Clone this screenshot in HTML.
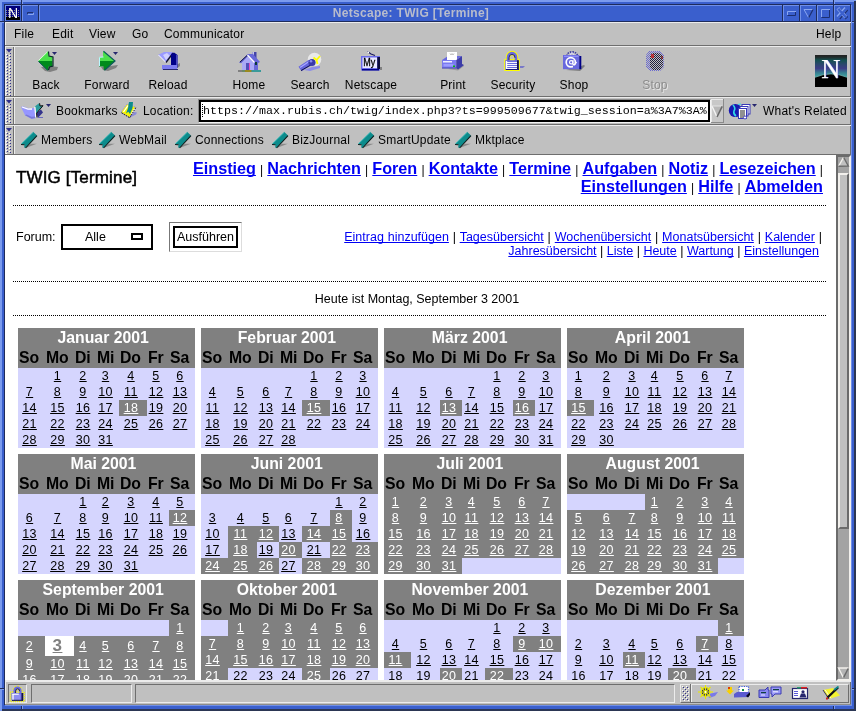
<!DOCTYPE html>
<html lang="de">
<head>
<meta charset="utf-8">
<title>Netscape: TWIG [Termine]</title>
<style>
*{box-sizing:border-box;margin:0;padding:0}
html,body{width:856px;height:711px;overflow:hidden}
body{position:relative;background:#3a5fcd;font-family:"Liberation Sans",sans-serif;font-size:12px;color:#000}
.abs,.abs>*{position:absolute}
#frame{position:absolute;left:0;top:0;width:856px;height:711px;will-change:transform}
#frame div{position:absolute}
/* window frame */
#fl1{left:0;top:0;width:2px;height:711px;background:#7b9bee}
#ft1{left:0;top:0;width:856px;height:2px;background:#7b9bee}
#fr1{left:854px;top:1px;width:2px;height:710px;background:#2b3654}
#fb1{left:2px;top:709px;width:854px;height:2px;background:#2b3654}
#fl2{left:4px;top:4px;width:1px;height:701px;background:#1f2c5c}
#ft2{left:4px;top:4px;width:847px;height:1px;background:#1f2c5c}
#fr2{left:851px;top:5px;width:1px;height:700px;background:#6f8fe8}
#fb2{left:5px;top:705px;width:847px;height:1px;background:#6f8fe8}
#tbline{left:5px;top:21px;width:846px;height:1px;background:#1f2c5c}
.nd{background:#1f2c5c}.nl{background:#7b9bee}
.vd{width:1px;height:16px;top:5px;background:#1f2c5c}
.vl{width:1px;height:16px;top:5px;background:#6f8fe8}
#title{left:40px;top:5px;width:742px;height:16px;line-height:16px;text-align:center;color:#b8bccc;font-weight:bold;font-size:12px;letter-spacing:.3px;white-space:nowrap}
/* chrome */
#chrome{position:absolute;left:5px;top:22px;width:846px;height:683px;background:#c0c0c0}
#cw{position:absolute;left:0;top:0;width:856px;height:711px;will-change:transform}
#cw>*{position:absolute}
#cw svg{position:absolute;overflow:visible}
.hl{background:#ececec;height:1px}
.vhl{background:#ececec;width:1px}
.sh{background:#6e6e6e;height:1px}
.t{font-size:12px;line-height:14px;white-space:nowrap;letter-spacing:.2px}
.tbtn{font-size:12px;line-height:14px;text-align:center;white-space:nowrap;width:70px;top:78px;letter-spacing:.2px}
.grip{display:none}
.inset{border:1px solid #ececec;border-top-color:#6e6e6e;border-left-color:#6e6e6e}
.outset{border:1px solid #6e6e6e;border-top-color:#ececec;border-left-color:#ececec}
#url{font-family:"Liberation Mono",monospace;font-size:11.67px;line-height:18px;padding-left:2px;white-space:nowrap;overflow:hidden}
/* content */
#view{position:absolute;left:5px;top:155px;width:831px;height:525px;background:#fff;overflow:hidden;font-size:12.5px}
#vi{position:absolute;left:0;top:0;width:831px;height:525px;will-change:transform}
#vi>div,#vi>a,#vi>span{position:absolute}
a{color:#0000f4;text-decoration:underline;text-decoration-skip-ink:none}
.dot{left:8px;width:814px;height:1px;background-image:linear-gradient(90deg,#000 1px,transparent 1px);background-size:2px 1px}
.nav{right:13px;white-space:nowrap;font-size:12px;line-height:20px;text-align:right;word-spacing:.8px}
.nav a{font-weight:bold;font-size:16.2px;text-decoration-thickness:1px;text-underline-offset:1px}
.sub{right:14px;white-space:nowrap;font-size:12.5px;line-height:14px;text-align:right;word-spacing:0}
.sub a{text-decoration-thickness:1px;text-underline-offset:1px}
.mon{position:absolute;width:177px;background:#d5d5fe}
.mon div{position:absolute}
.mt{left:0;top:0;width:177px;height:20px;background:#808080;color:#fff;font-weight:bold;font-size:17px;line-height:19px;text-align:center;white-space:nowrap}
.mt span{display:inline-block;transform:scaleX(.93);position:relative;left:-3px}
.wd{left:0;top:20px;width:177px;height:20px;background:#808080;font-weight:bold;font-size:17px;line-height:19px}
.wd span{position:absolute;top:0;text-align:left;padding-left:1px;transform-origin:0 0;transform:scaleX(.93);white-space:nowrap}
.wk{left:0;width:177px}
.d{position:absolute;top:0;text-align:center;text-decoration-skip-ink:none;font-size:12.5px;letter-spacing:.4px;text-decoration-thickness:1px;color:#000;text-decoration:underline;text-underline-offset:1px;padding-right:4px;padding-bottom:1px}
.d.b{background:#808080;color:#fff}
.d.today{background:#fff;color:#808080;font-weight:bold;font-size:17px}
</style>
</head>
<body>
<div id="frame">
<div id="fl1"></div><div id="ft1"></div><div id="fr1"></div><div id="fb1"></div>
<div id="fl2"></div><div id="ft2"></div><div id="fr2"></div><div id="fb2"></div>
<div style="left:0;top:709px;width:2px;height:2px;background:#7b9bee"></div>
<div style="left:5px;top:5px;width:846px;height:1px;background:#6f8fe8"></div>
<div id="tbline"></div>
<!-- resize notches -->
<div class="nd" style="left:21px;top:0;width:1px;height:4px"></div><div class="nl" style="left:22px;top:0;width:1px;height:4px"></div>
<div class="nd" style="left:833px;top:0;width:1px;height:4px"></div><div class="nl" style="left:834px;top:0;width:1px;height:4px"></div>
<div class="nd" style="left:21px;top:706px;width:1px;height:5px"></div><div class="nl" style="left:22px;top:706px;width:1px;height:3px"></div>
<div class="nd" style="left:833px;top:706px;width:1px;height:5px"></div><div class="nl" style="left:834px;top:706px;width:1px;height:3px"></div>
<div class="nd" style="left:0;top:21px;width:4px;height:1px"></div><div class="nl" style="left:0;top:22px;width:4px;height:1px"></div>
<div class="nd" style="left:852px;top:21px;width:2px;height:1px"></div><div class="nl" style="left:852px;top:22px;width:2px;height:1px"></div>
<div class="nd" style="left:0;top:688px;width:4px;height:1px"></div><div class="nl" style="left:0;top:689px;width:4px;height:1px"></div>
<div class="nd" style="left:852px;top:688px;width:4px;height:1px"></div><div class="nl" style="left:852px;top:689px;width:2px;height:1px"></div>
<div class="vl" style="left:5px"></div>
<div class="vd" style="left:21px"></div><div class="vl" style="left:22px"></div>
<div class="vd" style="left:38px"></div><div class="vl" style="left:39px"></div>
<div class="vd" style="left:782px"></div><div class="vl" style="left:783px"></div>
<div class="vd" style="left:799px"></div><div class="vl" style="left:800px"></div>
<div class="vd" style="left:816px"></div><div class="vl" style="left:817px"></div>
<div class="vd" style="left:833px"></div><div class="vl" style="left:834px"></div>
<div class="vd" style="left:850px"></div>
<div id="title">Netscape: TWIG [Termine]</div>
<svg width="856" height="22" viewBox="0 0 856 22" style="position:absolute;left:0;top:0">
<rect x="6" y="6" width="14" height="14" fill="#00007c"/>
<rect x="6" y="10" width="14" height="7" fill="url(#nd1)"/>
<rect x="6" y="17" width="14" height="3" fill="#000"/>
<text x="13" y="18" text-anchor="middle" font-family="Liberation Sans,sans-serif" font-size="14" fill="#fff">N</text>
<defs><pattern id="nd1" width="2" height="2" patternUnits="userSpaceOnUse"><rect width="1" height="1" fill="#8a8a8a"/></pattern></defs>
<!-- left menu button glyph (sunken) -->
<path d="M27.5,15 V12.5 H34" fill="none" stroke="#1c2f70" stroke-width="1"/><path d="M27.5,14.5 H33.5 V12.5" fill="none" stroke="#8aa6f0" stroke-width="1"/>
<!-- iconify -->
<path d="M787.5,15 V11.5 H796" fill="none" stroke="#8aa6f0" stroke-width="1"/><path d="M787.5,15.5 H795.5 V12" fill="none" stroke="#1c2f70" stroke-width="1"/>
<!-- shade -->
<path d="M813,9.5 H804 L808.5,17.5" fill="none" stroke="#8aa6f0" stroke-width="1"/><path d="M813,9.5 L808.8,17.5" fill="none" stroke="#1c2f70" stroke-width="1.2"/>
<!-- maximize -->
<path d="M821.5,17 V9.5 H830" fill="none" stroke="#8aa6f0" stroke-width="1"/><path d="M821.5,17.5 H829.5 V10" fill="none" stroke="#1c2f70" stroke-width="1"/>
<!-- close -->
<path d="M838.8,9.3 L846.8,18.3 M846.8,9.3 L838.8,18.3" fill="none" stroke="#1c2f70" stroke-width="3.6"/>
<path d="M837.8,8.3 L845.8,17.3 M845.8,8.3 L837.8,17.3" fill="none" stroke="#8aa6f0" stroke-width="3.6"/>
<path d="M838.3,8.8 L846.3,17.8 M846.3,8.8 L838.3,17.8" fill="none" stroke="#3a5fcd" stroke-width="2.4"/>
</svg>
</div>

<div id="chrome"></div>
<div id="cw">
<!-- menubar -->
<div class="hl" style="left:5px;top:22px;width:846px"></div>
<div class="vhl" style="left:5px;top:22px;height:683px"></div>
<div style="left:850px;top:23px;width:1px;height:132px;background:#6e6e6e"></div><div style="left:850px;top:682px;width:1px;height:23px;background:#6e6e6e"></div>
<span class="t" style="left:14px;top:27px">File</span><span class="t" style="left:52px;top:27px">Edit</span><span class="t" style="left:89px;top:27px">View</span><span class="t" style="left:132px;top:27px">Go</span><span class="t" style="left:164px;top:27px">Communicator</span><span class="t" style="left:816px;top:27px">Help</span>
<div class="sh" style="left:5px;top:45px;width:846px"></div>
<div class="hl" style="left:5px;top:46px;width:846px"></div>
<!-- toolbar 1 : y 46..96 -->
<div class="grip" style="left:6px;top:47px;height:49px"></div>
<div class="tbtn" style="left:11px">Back</div>
<div class="tbtn" style="left:72px">Forward</div>
<div class="tbtn" style="left:133px">Reload</div>
<div class="tbtn" style="left:214px">Home</div>
<div class="tbtn" style="left:275px">Search</div>
<div class="tbtn" style="left:336px">Netscape</div>
<div class="tbtn" style="left:418px">Print</div>
<div class="tbtn" style="left:478px">Security</div>
<div class="tbtn" style="left:539px">Shop</div>
<div class="tbtn" style="left:620px;color:#8c8c8c;text-shadow:1px 1px 0 #e6e6e6">Stop</div>
<!--ICONS1-->
<div class="sh" style="left:5px;top:96px;width:846px"></div>
<div class="hl" style="left:5px;top:97px;width:846px"></div>
<!-- location bar : y 97..125 -->
<div class="grip" style="left:6px;top:98px;height:26px"></div>
<span class="t" style="left:56px;top:104px">Bookmarks</span>
<span class="t" style="left:143px;top:104px">Location:</span>
<div style="left:198px;top:99px;width:513px;height:24px;border:1px solid #f4f4f4;border-top-color:#8a8a8a;border-left-color:#8a8a8a"></div>
<div id="url" style="left:199px;top:100px;width:511px;height:22px;border:2px solid #000;background:#fff">https://max.rubis.ch/twig/index.php3?ts=999509677&amp;twig_session=a%3A7%3A%</div>
<div id="cur" style="left:202px;top:104px;width:1px;height:14px;background-image:linear-gradient(#000 1px,transparent 1px);background-size:1px 2px"></div>
<span class="t" style="left:763px;top:104px">What's Related</span>
<!--ICONS2-->
<div class="sh" style="left:5px;top:124px;width:846px"></div>
<div class="hl" style="left:5px;top:125px;width:846px"></div>
<!-- personal bar : y 125..154 -->
<div class="grip" style="left:6px;top:126px;height:27px"></div>
<span class="t" style="left:41px;top:133px">Members</span>
<span class="t" style="left:119px;top:133px">WebMail</span>
<span class="t" style="left:195px;top:133px">Connections</span>
<span class="t" style="left:292px;top:133px">BizJournal</span>
<span class="t" style="left:378px;top:133px">SmartUpdate</span>
<span class="t" style="left:475px;top:133px">Mktplace</span>
<!--ICONS3-->
<div class="sh" style="left:5px;top:154px;width:846px"></div>
<!-- status bar : y 681..705 -->
<div class="hl" style="left:5px;top:680px;width:846px;height:2px"></div>
<div class="inset" style="left:8px;top:684px;width:19px;height:19px"></div>
<div class="inset" style="left:31px;top:684px;width:101px;height:19px"></div>
<div class="inset" style="left:135px;top:684px;width:540px;height:19px"></div>
<div class="outset" style="left:680px;top:684px;width:169px;height:19px"></div>
<div class="sh" style="left:5px;top:704px;width:846px;background:#8c8c8c"></div>
<svg id="ic" width="856" height="711" viewBox="0 0 856 711" style="left:0;top:0"><defs>
<pattern id="gp" x="6" y="53" width="7" height="3" patternUnits="userSpaceOnUse"><rect x="4" y="0" width="1" height="1" fill="#2e2e8a"/><rect x="3" y="2" width="1" height="1" fill="#fff"/><rect x="1" y="2" width="1" height="1" fill="#2e2e8a"/><rect x="0" y="1" width="1" height="1" fill="#fff"/></pattern>
<pattern id="gp2" x="682" y="686" width="4" height="4" patternUnits="userSpaceOnUse"><rect x="1" y="1" width="1" height="1" fill="#2e2e8a"/><rect x="0" y="0" width="1" height="1" fill="#fff"/><rect x="3" y="3" width="1" height="1" fill="#2e2e8a"/><rect x="2" y="2" width="1" height="1" fill="#fff"/></pattern>
<pattern id="ck" x="0" y="0" width="2" height="2" patternUnits="userSpaceOnUse"><rect x="0" y="0" width="1" height="1" fill="#202040"/><rect x="1" y="1" width="1" height="1" fill="#202040"/></pattern>
<pattern id="ck2" x="0" y="0" width="2" height="2" patternUnits="userSpaceOnUse"><rect x="0" y="0" width="1" height="1" fill="#6a6ad0"/><rect x="1" y="1" width="1" height="1" fill="#6a6ad0"/></pattern>
<linearGradient id="ng" x1="0" y1="0" x2="0" y2="1"><stop offset="0" stop-color="#222"/><stop offset=".06" stop-color="#202828"/><stop offset=".16" stop-color="#145050"/><stop offset=".3" stop-color="#2c4670"/><stop offset=".42" stop-color="#3c3c86"/><stop offset=".55" stop-color="#387c90"/><stop offset=".66" stop-color="#40a0a0"/><stop offset="1" stop-color="#40a0a0"/></linearGradient>
</defs>
<rect x="6" y="47" width="7" height="49" fill="url(#gp)"/>
<rect x="13" y="47" width="1" height="49" fill="#6e6e6e"/>
<rect x="14" y="47" width="1" height="49" fill="#ececec"/>
<rect x="6" y="47" width="7" height="6" fill="#c0c0c0"/>
<polygon points="6,49 12,49 9,52.5" fill="#2e2e8a"/>
<rect x="6" y="98" width="7" height="26" fill="url(#gp)"/>
<rect x="13" y="98" width="1" height="26" fill="#6e6e6e"/>
<rect x="14" y="98" width="1" height="26" fill="#ececec"/>
<rect x="6" y="98" width="7" height="6" fill="#c0c0c0"/>
<polygon points="6,100 12,100 9,103.5" fill="#2e2e8a"/>
<rect x="6" y="126" width="7" height="28" fill="url(#gp)"/>
<rect x="13" y="126" width="1" height="28" fill="#6e6e6e"/>
<rect x="14" y="126" width="1" height="28" fill="#ececec"/>
<rect x="6" y="126" width="7" height="6" fill="#c0c0c0"/>
<polygon points="6,128 12,128 9,131.5" fill="#2e2e8a"/>
<polygon points="41,67 50,66 58,67 57,70 50,72 45,71" fill="#808080"/>
<polygon points="38,61 48,51 48.6,56 52.5,56 52.5,61" fill="#4be04b"/>
<polygon points="38,61 52.5,61 52.5,66.5 48.6,66.5 48,70.5" fill="#008a1c"/>
<polyline points="48.5,51.5 49,56 53,57 53,66 49.5,67 48.5,70" fill="none" stroke="#0a2a2a" stroke-width="1.2"/>
<polyline points="38.5,60.5 47.5,51.8" fill="none" stroke="#d8ffd8" stroke-width="1"/>
<polyline points="38.5,61.5 47.5,70.2" fill="none" stroke="#0a5a5a" stroke-width="1"/>
<polygon points="52,52 57,52 54.5,55" fill="#26266e"/>
<polygon points="101,67 110,66 118,65 116,68 108,71 103,70" fill="#808080"/>
<polygon points="103,51 115,61 99,61 99,57 103,57" fill="#4be04b"/>
<polygon points="99,61 115,61 104,70.5 103.5,66.5 99,66.5" fill="#008a1c"/>
<polyline points="103.5,51.3 115,61 104.5,70.3" fill="none" stroke="#0a5a5a" stroke-width="1.2"/>
<polyline points="103.5,57 99.5,57.3 99.5,66" fill="none" stroke="#b8f8ff" stroke-width="1"/>
<polygon points="113,52 118,52 115.5,55" fill="#26266e"/>
<polygon points="166,70 176,69 180,66 180,63 178,64" fill="#808080"/>
<polygon points="158,55 164,52 173,52 166,62.5" fill="#9a9aff"/>
<polygon points="163,55 167,53 170,56 166,60" fill="#d0d0ff"/>
<polyline points="158.5,55 166,62.5" stroke="#fff" stroke-width="1" fill="none"/>
<polyline points="166,62.5 173,53" stroke="#101030" stroke-width="1.3" fill="none"/>
<polygon points="171,54 174,52.5 177.5,55 177.5,67.5 171,67.5" fill="#000088"/>
<rect x="176" y="55" width="1.5" height="13" fill="#4a4ac0"/>
<rect x="162" y="65" width="15" height="4.5" fill="#7c7cf0"/>
<rect x="163" y="69" width="15" height="1" fill="#26266e"/>
<rect x="238" y="70" width="23" height="2" fill="#6a8a6a"/>
<rect x="238" y="70" width="4" height="2" fill="#808080"/><rect x="252" y="70" width="9" height="2" fill="#3a9a9a"/><rect x="245" y="70" width="6" height="2" fill="#9a8a20"/>
<rect x="252" y="52" width="4.5" height="9" fill="#4444a8"/><rect x="252.5" y="52" width="1.2" height="4" fill="#fff"/>
<polygon points="247,54 253,54 260,62 258,63 258,70 254,70 254,62" fill="#6868d8"/>
<polygon points="242,62 247.5,56 254,62.5 254,70 242,70" fill="#aaaaf6"/>
<polygon points="239,62.5 247.5,54.5 248.5,55.5 241,63.3" fill="#5a5ad0"/>
<polyline points="247.5,55 254.5,62.5" stroke="#fff" stroke-width="1.2" fill="none"/>
<polyline points="240,62 247,55.5" stroke="#16163a" stroke-width="1" fill="none"/>
<rect x="246" y="63" width="3" height="7" fill="#5050b8"/><rect x="249" y="63" width="1" height="7" fill="#e050c0"/>
<rect x="255" y="62" width="2" height="3" fill="#0a3a3a"/>
<circle cx="314.5" cy="59.5" r="6.8" fill="#e9e9e9"/>
<polygon points="304,70 312,67 320,66 320,68 310,71" fill="#8c8ce8"/>
<polygon points="298.5,66.8 309,59.8 312.5,64.8 301.5,71.3" fill="#6464dc"/>
<polyline points="300,67.5 309.5,61.3" stroke="#a8a8ff" stroke-width="1.2" fill="none"/>
<polyline points="301,70.6 311.5,64.5" stroke="#101048" stroke-width="1" fill="none"/>
<circle cx="312" cy="62.5" r="3.6" fill="#3a3aa8"/>
<circle cx="311" cy="61.3" r="1.3" fill="#8a8af0"/>
<polyline points="313.5,57.5 316.5,60 320,56" stroke="#ffff00" stroke-width="1.8" fill="none"/>
<polyline points="316.5,60 317.5,64" stroke="#ffff00" stroke-width="1.8" fill="none"/>
<polyline points="367.5,51.5 371,54 375,55.5" stroke="#1a1a60" stroke-width="1.2" fill="none"/>
<rect x="367.5" y="51.5" width="1.5" height="1.5" fill="#fff"/>
<rect x="361" y="56" width="19" height="14.5" fill="#6c6cec"/>
<rect x="362.5" y="57.5" width="14.5" height="10.5" fill="#e9e9ff"/>
<rect x="377.3" y="57" width="2.7" height="12" fill="#0a0a3a"/>
<rect x="362" y="69" width="17" height="1.5" fill="#000088"/>
<text x="363.3" y="66.2" font-family="Liberation Sans,sans-serif" font-size="10" fill="#000" stroke="#000" stroke-width=".3" textLength="12" lengthAdjust="spacingAndGlyphs">My</text>
<rect x="380" y="67" width="2" height="3" fill="#808080"/>
<polygon points="448,69 458,70.5 464,66 462,64" fill="#808080" opacity=".6"/>
<polygon points="442,60 448,56 462,56 456,60" fill="#6a6ae0"/>
<rect x="447" y="52" width="10" height="8" fill="#fff"/>
<polyline points="450,53.5 451,55 452,53.5 453,55 454,53.5" stroke="#b0b0b0" stroke-width=".8" fill="none"/>
<rect x="442" y="60" width="14.3" height="8.3" fill="#7a7af0"/>
<rect x="443" y="61" width="9" height="1.5" fill="#f0f0ff"/>
<rect x="443.5" y="64" width="10" height="2.5" fill="#9c9cff"/>
<rect x="442" y="67.5" width="14.3" height="1" fill="#4a4ab0"/>
<polygon points="456.3,60 462,56 462,64 464,65 458,69.5 456.3,68.3" fill="#3c3ca8"/>
<rect x="453" y="65.5" width="2" height="1.5" fill="#00c000"/>
<path d="M508.0,61.0 V57.5 A4.0,4.5 0 0 1 516.0,57.5 V61.0" fill="none" stroke="#ffff00" stroke-width="4.4"/>
<rect x="504.2" y="59.2" width="15.6" height="11.8" fill="#ffff00"/>
<path d="M508.0,61.0 V57.5 A4.0,4.5 0 0 1 516.0,57.5 V61.0" fill="none" stroke="#6a6ae0" stroke-width="2.6"/>
<path d="M509.0,60.0 V57.8 A3.0,3.4 0 0 1 515.0,57.8" fill="none" stroke="#14147a" stroke-width="0.9"/>
<rect x="505.2" y="60.2" width="13.6" height="9.8" fill="#6a6ae0"/>
<rect x="507.0" y="62.0" width="10.0" height="1.0" fill="#f4f4ff" shape-rendering="crispEdges"/>
<rect x="507.0" y="64.0" width="10.0" height="1.0" fill="#f4f4ff" shape-rendering="crispEdges"/>
<rect x="507.0" y="66.0" width="10.0" height="1.0" fill="#f4f4ff" shape-rendering="crispEdges"/>
<rect x="507.0" y="68.0" width="10.0" height="1.0" fill="#f4f4ff" shape-rendering="crispEdges"/>
<rect x="505.8" y="61.0" width="1.4" height="8.0" fill="#fff"/>
<rect x="517.0" y="60.2" width="1.8" height="9.8" fill="#14144a"/>
<rect x="506.0" y="69.0" width="12.8" height="1.0" fill="#14147a"/>
<polygon points="520.0,66.0 525.0,66.0 523.0,68.0 520.0,68.0" fill="#7878c8"/>
<polygon points="566,70 580,71 585,66 584,65 581,66" fill="#808080"/>
<path d="M567,56 C567,50.5 577,50.5 577.5,56" fill="none" stroke="#3a3aa0" stroke-width="1.6" stroke-dasharray="1.5 1"/>
<path d="M569.5,56 L572,52.5 L575,56" fill="none" stroke="#d8d8ff" stroke-width="1"/>
<rect x="563" y="55" width="16.3" height="14.2" fill="#6868de"/>
<rect x="579.3" y="56" width="2" height="13.2" fill="#000088"/>
<rect x="564" y="55.8" width="14.5" height="1" fill="#9a9aff"/>
<circle cx="570.8" cy="62.3" r="4.6" fill="none" stroke="#fff" stroke-width="1.7"/>
<circle cx="571.2" cy="62.3" r="1.7" fill="none" stroke="#fff" stroke-width="1.1"/>
<path d="M573,60 V64.5 Q575.5,65 576.5,62" fill="none" stroke="#fff" stroke-width="1.1"/>
<rect x="573" y="65.5" width="4" height="3" fill="#6868de"/>
<path d="M649,51 H660 L664,55 V67 L660,71 H650 L646,67 V55 Z" fill="url(#ck2)"/>
<path d="M652,53 H659 L663,56 V66 L660,70 H653 L650,67 V56 Z" fill="url(#ck)"/>
<rect x="651" y="54" width="3" height="4" fill="#d02020" opacity=".75"/>
<rect x="661" y="56" width="2" height="3" fill="#901010" opacity=".6"/>
<rect x="815" y="55" width="32" height="32" fill="url(#ng)"/>
<path d="M815,77.3 Q831,70.5 847,77.3 V87 H815 Z" fill="#000"/>
<path d="M815,77.3 Q831,70.5 847,77.3" fill="none" stroke="#7ab8b8" stroke-width=".7"/>
<text x="831.6" y="78.3" text-anchor="middle" font-family="Liberation Serif,serif" font-size="26.5" fill="#4848c8" >N</text>
<text x="830.9" y="77.7" text-anchor="middle" font-family="Liberation Serif,serif" font-size="26.5" fill="#fff" stroke="#fff" stroke-width=".25">N</text>
<polygon points="21,107 23,106.3 29,108.5 31,108.5 34.5,107.7 35.8,118 31.5,118.7 25,115.3" fill="#9696ff"/>
<polyline points="22,107 28,109.2 32,109" stroke="#fff" stroke-width="1.3" fill="none"/>
<polygon points="25,115.3 31.5,118.7 35.8,118 35.5,116.5 31.5,116.8 26.5,114.5" fill="#7878d8"/>
<polygon points="36.3,113 41,109.5 43,112.5 38,117.8" fill="#34348c"/>
<polygon points="34.7,106.5 39.4,103 40,106 43,105.6 36.2,113.5" fill="#2a9c9c"/>
<polyline points="34.9,106.8 35.8,117.5" stroke="#fff" stroke-width="1.2" fill="none"/>
<polyline points="39.6,103.3 40,106 43,105.7 36.6,113.2 37,117.5" stroke="#0c0c0c" stroke-width="1" fill="none"/>
<rect x="38" y="117" width="5" height="1" fill="#6a6ac0"/>
<polygon points="46,104 51,104 48.5,107" fill="#26266e"/>
<polygon points="130,117.5 136,114.5 137,112.5 134,112" fill="#8a8ad8"/>
<polygon points="121,112.2 127,104 135.8,107.2 129.5,117.5" fill="#f4f400"/>
<polygon points="121,112.2 127,104 135.8,107.2 129.5,117.5" fill="none" stroke="#8c8cf0" stroke-width="1" stroke-dasharray="1.2 1"/>
<polyline points="123.5,112 128,105.5" stroke="#fff" stroke-width="1.3" fill="none"/>
<polyline points="131.5,114 134.8,108.5" stroke="#fff" stroke-width="1.3" fill="none"/>
<polyline points="129.8,117.6 135.9,107.4" stroke="#101020" stroke-width="1" fill="none" stroke-dasharray="1.5 1"/>
<polyline points="121.5,112.8 129.6,117.7" stroke="#101020" stroke-width="1" fill="none" stroke-dasharray="1.5 1"/>
<polygon points="129,102 133,102 132.5,108 130,114 128.3,111.8 126,113.5 128,108" fill="#0c8c8c"/>
<rect x="711" y="99" width="13" height="24" fill="#c8c8c8"/>
<rect x="711" y="99" width="13" height="1" fill="#e8e8e8"/><rect x="711" y="99" width="1" height="24" fill="#e8e8e8"/>
<rect x="723" y="99" width="1" height="24" fill="#8a8a8a"/><rect x="711" y="122" width="13" height="1" fill="#8a8a8a"/>
<polygon points="712,106 722.5,106 717,117" fill="#b8b8b8"/>
<polyline points="712,106 717,117" stroke="#f4f4f4" stroke-width="1.4" fill="none"/>
<polyline points="712,106 722,106" stroke="#e4e4e4" stroke-width="1" fill="none"/>
<polyline points="722.2,106.3 717,117" stroke="#6a6a6a" stroke-width="1.6" fill="none"/>
<circle cx="735.4" cy="110.5" r="6.6" fill="#1818b0"/>
<path d="M733,105 Q736,108 734,111 Q733,114 736,116" fill="none" stroke="#30d8e8" stroke-width="1.6"/>
<path d="M738,104.5 L741,104" stroke="#30d8e8" stroke-width="1.2"/>
<rect x="742" y="104.5" width="8" height="9.5" fill="#fff" stroke="#3838b8" stroke-width="1"/>
<rect x="740" y="106.5" width="8" height="9.5" fill="#fff" stroke="#3838b8" stroke-width="1"/>
<rect x="738.5" y="108.5" width="8" height="10" fill="#fff" stroke="#3838b8" stroke-width="1"/>
<rect x="740" y="110.5" width="5" height="1" fill="#222"/>
<rect x="740" y="112.5" width="5" height="1" fill="#222"/>
<rect x="740" y="114.5" width="5" height="1" fill="#222"/>
<rect x="740" y="116.5" width="5" height="1" fill="#222"/>
<circle cx="745" cy="117.5" r="1.5" fill="#fff" stroke="#3838b8" stroke-width=".8"/>
<polygon points="752,104 757,104 754.5,107" fill="#26266e"/>
<polygon points="27,147.6 36.8,143.8 31,143.8 26,147" fill="#8a8a8a"/>
<polygon points="33.3,131.9 37,135.4 25.4,148 24.2,147.4 24.5,144.6 21,144.2" fill="#0c8c8c"/>
<polyline points="37,135.6 25.6,148" stroke="#0a1a1a" stroke-width="1.1" fill="none"/>
<polyline points="21,144.5 24.6,144.8" stroke="#0a1a1a" stroke-width="1" fill="none"/>
<polyline points="21.5,143.6 33.3,132.3" stroke="#40c0c0" stroke-width=".8" fill="none"/>
<polygon points="105,147.6 114.8,143.8 109,143.8 104,147" fill="#8a8a8a"/>
<polygon points="111.3,131.9 115,135.4 103.4,148 102.2,147.4 102.5,144.6 99,144.2" fill="#0c8c8c"/>
<polyline points="115,135.6 103.6,148" stroke="#0a1a1a" stroke-width="1.1" fill="none"/>
<polyline points="99,144.5 102.6,144.8" stroke="#0a1a1a" stroke-width="1" fill="none"/>
<polyline points="99.5,143.6 111.3,132.3" stroke="#40c0c0" stroke-width=".8" fill="none"/>
<polygon points="181,147.6 190.8,143.8 185,143.8 180,147" fill="#8a8a8a"/>
<polygon points="187.3,131.9 191,135.4 179.4,148 178.2,147.4 178.5,144.6 175,144.2" fill="#0c8c8c"/>
<polyline points="191,135.6 179.6,148" stroke="#0a1a1a" stroke-width="1.1" fill="none"/>
<polyline points="175,144.5 178.6,144.8" stroke="#0a1a1a" stroke-width="1" fill="none"/>
<polyline points="175.5,143.6 187.3,132.3" stroke="#40c0c0" stroke-width=".8" fill="none"/>
<polygon points="278,147.6 287.8,143.8 282,143.8 277,147" fill="#8a8a8a"/>
<polygon points="284.3,131.9 288,135.4 276.4,148 275.2,147.4 275.5,144.6 272,144.2" fill="#0c8c8c"/>
<polyline points="288,135.6 276.6,148" stroke="#0a1a1a" stroke-width="1.1" fill="none"/>
<polyline points="272,144.5 275.6,144.8" stroke="#0a1a1a" stroke-width="1" fill="none"/>
<polyline points="272.5,143.6 284.3,132.3" stroke="#40c0c0" stroke-width=".8" fill="none"/>
<polygon points="364,147.6 373.8,143.8 368,143.8 363,147" fill="#8a8a8a"/>
<polygon points="370.3,131.9 374,135.4 362.4,148 361.2,147.4 361.5,144.6 358,144.2" fill="#0c8c8c"/>
<polyline points="374,135.6 362.6,148" stroke="#0a1a1a" stroke-width="1.1" fill="none"/>
<polyline points="358,144.5 361.6,144.8" stroke="#0a1a1a" stroke-width="1" fill="none"/>
<polyline points="358.5,143.6 370.3,132.3" stroke="#40c0c0" stroke-width=".8" fill="none"/>
<polygon points="461,147.6 470.8,143.8 465,143.8 460,147" fill="#8a8a8a"/>
<polygon points="467.3,131.9 471,135.4 459.4,148 458.2,147.4 458.5,144.6 455,144.2" fill="#0c8c8c"/>
<polyline points="471,135.6 459.6,148" stroke="#0a1a1a" stroke-width="1.1" fill="none"/>
<polyline points="455,144.5 458.6,144.8" stroke="#0a1a1a" stroke-width="1" fill="none"/>
<polyline points="455.5,143.6 467.3,132.3" stroke="#40c0c0" stroke-width=".8" fill="none"/>
<path d="M14.5,694 V691 A3,3.5 0 0 1 20.5,691 V694" fill="none" stroke="#f0f000" stroke-width="4.2" stroke-dasharray="1 1"/>
<rect x="10.3" y="692" width="14" height="9.6" fill="none" stroke="#f0f000" stroke-width="1.2" stroke-dasharray="1 1"/>
<rect x="10.8" y="692.5" width="13" height="8.5" fill="#e8e860" opacity=".55"/>
<path d="M14.5,694 V691 A3,3.5 0 0 1 20.5,691 V694" fill="none" stroke="#6a6ae0" stroke-width="2.2"/>
<path d="M15.6,693 V691.2 A2,2.4 0 0 1 19.6,691.2" fill="none" stroke="#101050" stroke-width=".9"/>
<rect x="11.5" y="693" width="11.5" height="7.5" fill="#6a6ae0"/>
<rect x="13.5" y="694.5" width="7" height="1" fill="#b4b4ff"/>
<rect x="13.5" y="696.5" width="7" height="1" fill="#b4b4ff"/>
<rect x="13.5" y="698.5" width="7" height="1" fill="#b4b4ff"/>
<rect x="12.3" y="694" width="1.4" height="6" fill="#fff"/><rect x="12.3" y="693.6" width="6.5" height="1.2" fill="#fff"/>
<rect x="21.5" y="693" width="1.8" height="7.5" fill="#14144a"/>
<rect x="12" y="699.8" width="11" height="1" fill="#101040"/>
<rect x="682" y="686" width="7" height="15" fill="url(#gp2)"/>
<rect x="690" y="684" width="1" height="18" fill="#6e6e6e"/><rect x="691" y="684" width="1" height="18" fill="#ececec"/>
<polygon points="708,694 718,692 715,696 709,698" fill="#7a7ae8"/>
<circle cx="705.5" cy="692" r="4.4" fill="#26266e"/>
<circle cx="705.5" cy="692" r="4.4" fill="none" stroke="#f0f000" stroke-width="1.2"/>
<line x1="698" y1="692" x2="713" y2="692" stroke="#e8e800" stroke-width="1.1"/>
<line x1="705.5" y1="685" x2="705.5" y2="699" stroke="#e8e800" stroke-width="1.1"/>
<line x1="700.5" y1="687" x2="710.5" y2="697" stroke="#e8e800" stroke-width="1.1"/>
<line x1="700.5" y1="697" x2="710.5" y2="687" stroke="#e8e800" stroke-width="1.1"/>
<circle cx="705.5" cy="692" r="1" fill="#fff"/>
<polygon points="728,687 732,687 732,690.5 734,690.5 730,694.5 726,690.5 728,690.5" fill="#f8d000"/>
<rect x="728" y="687" width="2" height="2" fill="#e04000"/>
<rect x="739" y="686.5" width="9.5" height="8" fill="#fff" stroke="#3a5ae0" stroke-width="1.2" stroke-dasharray="1.2 1.2"/>
<rect x="742" y="689" width="2" height="2" fill="#109040"/>
<polygon points="734,694 737,692 749,692 749,697 734,697.5" fill="#5a5ad0"/>
<polygon points="746,696 750,692 750,695 748,697.5" fill="#0a0a20"/>
<path d="M759,690 H765 L768,687 V690 H769 V697.5 H759 Z" fill="#8888f0" stroke="#3a3ab0" stroke-width="1"/>
<rect x="761" y="692" width="5" height="1.2" fill="#104040"/><rect x="761" y="694.5" width="4" height="1" fill="#e8e8ff"/>
<path d="M771,687 H781 V694 H775 L772,697 V694 H771 Z" fill="#9a9af8" stroke="#3a3ab0" stroke-width="1"/>
<rect x="773" y="689" width="6" height="1.2" fill="#104040"/><rect x="773" y="691.3" width="5" height="1" fill="#f4f4ff"/>
<rect x="792.5" y="688.5" width="15" height="10" fill="#fff" stroke="#26266e" stroke-width="1.2"/>
<rect x="797" y="687" width="4" height="1.5" fill="#2a9a6a"/><rect x="801" y="687" width="6" height="1.5" fill="#e02020"/>
<rect x="794" y="691" width="4" height="1" fill="#5a5ad8"/><rect x="794" y="693" width="4" height="1" fill="#5a5ad8"/><rect x="794" y="695" width="4" height="1" fill="#5a5ad8"/>
<circle cx="803" cy="691.8" r="1.6" fill="#26266e"/><polygon points="799.5,697.5 801,693.5 805,693.5 806.5,697.5" fill="#26266e"/>
<polygon points="823,690 833,688 840,695.5 829,699" fill="#f4f430"/>
<polyline points="823,690 829,699" stroke="#303060" stroke-width="1"/>
<polyline points="825,689.8 831,698.3 M828,689.2 834,697.4 M831,688.6 837,696.5" stroke="#fff" stroke-width=".8" fill="none"/>
<line x1="827.5" y1="697.5" x2="838" y2="687.5" stroke="#101018" stroke-width="2.4"/>
<line x1="834" y1="690" x2="838.5" y2="686.5" stroke="#108888" stroke-width="1.6"/>
<rect x="826" y="697.5" width="2" height="2" fill="#d02020"/>
</svg>
</div>

<div id="view"><div id="vi">
<div style="left:11px;top:13px;font-size:17px;line-height:20px;white-space:nowrap;-webkit-text-stroke:.5px #000;letter-spacing:.15px">TWIG [Termine]</div>
<div class="nav" style="top:3px"><a>Einstieg</a> | <a>Nachrichten</a> | <a>Foren</a> | <a>Kontakte</a> | <a>Termine</a> | <a>Aufgaben</a> | <a>Notiz</a> | <a>Lesezeichen</a> |</div>
<div class="nav" style="top:21px"><a>Einstellungen</a> | <a>Hilfe</a> | <a>Abmelden</a></div>
<div class="dot" style="top:50px"></div>
<div style="left:11px;top:75px;line-height:14px">Forum:</div>
<div style="left:56px;top:69px;width:92px;height:26px;border:2px solid #000"></div>
<div style="left:80px;top:75px;line-height:14px">Alle</div>
<div style="left:126px;top:78px;width:12px;height:7px;border:2px solid #000"></div>
<div style="left:164px;top:67px;width:73px;height:30px;border:1px solid #ddd;border-top-color:#777;border-left-color:#777"></div>
<div style="left:168px;top:71px;width:65px;height:22px;border:2px solid #000;text-align:center;line-height:18px">Ausführen</div>
<div class="sub" style="top:75px;word-spacing:.4px"><a>Eintrag hinzufügen</a> | <a>Tagesübersicht</a> | <a>Wochenübersicht</a> | <a>Monatsübersicht</a> | <a>Kalender</a> |</div>
<div class="sub" style="top:89px;right:17px"><a>Jahresübersicht</a> | <a>Liste</a> | <a>Heute</a> | <a>Wartung</a> | <a>Einstellungen</a></div>
<div class="dot" style="top:126px"></div>
<div style="left:5px;top:137px;width:814px;text-align:center;line-height:14px">Heute ist Montag, September 3 2001</div>
<div class="dot" style="top:160px"></div>
<div class="mon" style="left:13px;top:173px;height:120px">
<div class="mt"><span>Januar 2001</span></div>
<div class="wd"><span style="left:0px;width:27px">So</span><span style="left:27px;width:29px">Mo</span><span style="left:56px;width:22px">Di</span><span style="left:78px;width:23px">Mi</span><span style="left:101px;width:28px">Do</span><span style="left:129px;width:22px">Fr</span><span style="left:151px;width:26px">Sa</span></div>
<div class="wk" style="top:40px;height:16px">
<a class="d" style="left:27px;width:29px;height:16px;line-height:16px">1</a>
<a class="d" style="left:56px;width:22px;height:16px;line-height:16px">2</a>
<a class="d" style="left:78px;width:23px;height:16px;line-height:16px">3</a>
<a class="d" style="left:101px;width:28px;height:16px;line-height:16px">4</a>
<a class="d" style="left:129px;width:22px;height:16px;line-height:16px">5</a>
<a class="d" style="left:151px;width:26px;height:16px;line-height:16px">6</a>
</div>
<div class="wk" style="top:56px;height:16px">
<a class="d" style="left:0px;width:27px;height:16px;line-height:16px">7</a>
<a class="d" style="left:27px;width:29px;height:16px;line-height:16px">8</a>
<a class="d" style="left:56px;width:22px;height:16px;line-height:16px">9</a>
<a class="d" style="left:78px;width:23px;height:16px;line-height:16px">10</a>
<a class="d" style="left:101px;width:28px;height:16px;line-height:16px">11</a>
<a class="d" style="left:129px;width:22px;height:16px;line-height:16px">12</a>
<a class="d" style="left:151px;width:26px;height:16px;line-height:16px">13</a>
</div>
<div class="wk" style="top:72px;height:16px">
<a class="d" style="left:0px;width:27px;height:16px;line-height:16px">14</a>
<a class="d" style="left:27px;width:29px;height:16px;line-height:16px">15</a>
<a class="d" style="left:56px;width:22px;height:16px;line-height:16px">16</a>
<a class="d" style="left:78px;width:23px;height:16px;line-height:16px">17</a>
<a class="d b" style="left:101px;width:28px;height:16px;line-height:16px">18</a>
<a class="d" style="left:129px;width:22px;height:16px;line-height:16px">19</a>
<a class="d" style="left:151px;width:26px;height:16px;line-height:16px">20</a>
</div>
<div class="wk" style="top:88px;height:16px">
<a class="d" style="left:0px;width:27px;height:16px;line-height:16px">21</a>
<a class="d" style="left:27px;width:29px;height:16px;line-height:16px">22</a>
<a class="d" style="left:56px;width:22px;height:16px;line-height:16px">23</a>
<a class="d" style="left:78px;width:23px;height:16px;line-height:16px">24</a>
<a class="d" style="left:101px;width:28px;height:16px;line-height:16px">25</a>
<a class="d" style="left:129px;width:22px;height:16px;line-height:16px">26</a>
<a class="d" style="left:151px;width:26px;height:16px;line-height:16px">27</a>
</div>
<div class="wk" style="top:104px;height:16px">
<a class="d" style="left:0px;width:27px;height:16px;line-height:16px">28</a>
<a class="d" style="left:27px;width:29px;height:16px;line-height:16px">29</a>
<a class="d" style="left:56px;width:22px;height:16px;line-height:16px">30</a>
<a class="d" style="left:78px;width:23px;height:16px;line-height:16px">31</a>
</div>
</div>
<div class="mon" style="left:196px;top:173px;height:120px">
<div class="mt"><span>Februar 2001</span></div>
<div class="wd"><span style="left:0px;width:27px">So</span><span style="left:27px;width:29px">Mo</span><span style="left:56px;width:22px">Di</span><span style="left:78px;width:23px">Mi</span><span style="left:101px;width:28px">Do</span><span style="left:129px;width:22px">Fr</span><span style="left:151px;width:26px">Sa</span></div>
<div class="wk" style="top:40px;height:16px">
<a class="d" style="left:101px;width:28px;height:16px;line-height:16px">1</a>
<a class="d" style="left:129px;width:22px;height:16px;line-height:16px">2</a>
<a class="d" style="left:151px;width:26px;height:16px;line-height:16px">3</a>
</div>
<div class="wk" style="top:56px;height:16px">
<a class="d" style="left:0px;width:27px;height:16px;line-height:16px">4</a>
<a class="d" style="left:27px;width:29px;height:16px;line-height:16px">5</a>
<a class="d" style="left:56px;width:22px;height:16px;line-height:16px">6</a>
<a class="d" style="left:78px;width:23px;height:16px;line-height:16px">7</a>
<a class="d" style="left:101px;width:28px;height:16px;line-height:16px">8</a>
<a class="d" style="left:129px;width:22px;height:16px;line-height:16px">9</a>
<a class="d" style="left:151px;width:26px;height:16px;line-height:16px">10</a>
</div>
<div class="wk" style="top:72px;height:16px">
<a class="d" style="left:0px;width:27px;height:16px;line-height:16px">11</a>
<a class="d" style="left:27px;width:29px;height:16px;line-height:16px">12</a>
<a class="d" style="left:56px;width:22px;height:16px;line-height:16px">13</a>
<a class="d" style="left:78px;width:23px;height:16px;line-height:16px">14</a>
<a class="d b" style="left:101px;width:28px;height:16px;line-height:16px">15</a>
<a class="d" style="left:129px;width:22px;height:16px;line-height:16px">16</a>
<a class="d" style="left:151px;width:26px;height:16px;line-height:16px">17</a>
</div>
<div class="wk" style="top:88px;height:16px">
<a class="d" style="left:0px;width:27px;height:16px;line-height:16px">18</a>
<a class="d" style="left:27px;width:29px;height:16px;line-height:16px">19</a>
<a class="d" style="left:56px;width:22px;height:16px;line-height:16px">20</a>
<a class="d" style="left:78px;width:23px;height:16px;line-height:16px">21</a>
<a class="d" style="left:101px;width:28px;height:16px;line-height:16px">22</a>
<a class="d" style="left:129px;width:22px;height:16px;line-height:16px">23</a>
<a class="d" style="left:151px;width:26px;height:16px;line-height:16px">24</a>
</div>
<div class="wk" style="top:104px;height:16px">
<a class="d" style="left:0px;width:27px;height:16px;line-height:16px">25</a>
<a class="d" style="left:27px;width:29px;height:16px;line-height:16px">26</a>
<a class="d" style="left:56px;width:22px;height:16px;line-height:16px">27</a>
<a class="d" style="left:78px;width:23px;height:16px;line-height:16px">28</a>
</div>
</div>
<div class="mon" style="left:379px;top:173px;height:120px">
<div class="mt"><span>März 2001</span></div>
<div class="wd"><span style="left:0px;width:27px">So</span><span style="left:27px;width:29px">Mo</span><span style="left:56px;width:22px">Di</span><span style="left:78px;width:23px">Mi</span><span style="left:101px;width:28px">Do</span><span style="left:129px;width:22px">Fr</span><span style="left:151px;width:26px">Sa</span></div>
<div class="wk" style="top:40px;height:16px">
<a class="d" style="left:101px;width:28px;height:16px;line-height:16px">1</a>
<a class="d" style="left:129px;width:22px;height:16px;line-height:16px">2</a>
<a class="d" style="left:151px;width:26px;height:16px;line-height:16px">3</a>
</div>
<div class="wk" style="top:56px;height:16px">
<a class="d" style="left:0px;width:27px;height:16px;line-height:16px">4</a>
<a class="d" style="left:27px;width:29px;height:16px;line-height:16px">5</a>
<a class="d" style="left:56px;width:22px;height:16px;line-height:16px">6</a>
<a class="d" style="left:78px;width:23px;height:16px;line-height:16px">7</a>
<a class="d" style="left:101px;width:28px;height:16px;line-height:16px">8</a>
<a class="d" style="left:129px;width:22px;height:16px;line-height:16px">9</a>
<a class="d" style="left:151px;width:26px;height:16px;line-height:16px">10</a>
</div>
<div class="wk" style="top:72px;height:16px">
<a class="d" style="left:0px;width:27px;height:16px;line-height:16px">11</a>
<a class="d" style="left:27px;width:29px;height:16px;line-height:16px">12</a>
<a class="d b" style="left:56px;width:22px;height:16px;line-height:16px">13</a>
<a class="d" style="left:78px;width:23px;height:16px;line-height:16px">14</a>
<a class="d" style="left:101px;width:28px;height:16px;line-height:16px">15</a>
<a class="d b" style="left:129px;width:22px;height:16px;line-height:16px">16</a>
<a class="d" style="left:151px;width:26px;height:16px;line-height:16px">17</a>
</div>
<div class="wk" style="top:88px;height:16px">
<a class="d" style="left:0px;width:27px;height:16px;line-height:16px">18</a>
<a class="d" style="left:27px;width:29px;height:16px;line-height:16px">19</a>
<a class="d" style="left:56px;width:22px;height:16px;line-height:16px">20</a>
<a class="d" style="left:78px;width:23px;height:16px;line-height:16px">21</a>
<a class="d" style="left:101px;width:28px;height:16px;line-height:16px">22</a>
<a class="d" style="left:129px;width:22px;height:16px;line-height:16px">23</a>
<a class="d" style="left:151px;width:26px;height:16px;line-height:16px">24</a>
</div>
<div class="wk" style="top:104px;height:16px">
<a class="d" style="left:0px;width:27px;height:16px;line-height:16px">25</a>
<a class="d" style="left:27px;width:29px;height:16px;line-height:16px">26</a>
<a class="d" style="left:56px;width:22px;height:16px;line-height:16px">27</a>
<a class="d" style="left:78px;width:23px;height:16px;line-height:16px">28</a>
<a class="d" style="left:101px;width:28px;height:16px;line-height:16px">29</a>
<a class="d" style="left:129px;width:22px;height:16px;line-height:16px">30</a>
<a class="d" style="left:151px;width:26px;height:16px;line-height:16px">31</a>
</div>
</div>
<div class="mon" style="left:562px;top:173px;height:120px">
<div class="mt"><span>April 2001</span></div>
<div class="wd"><span style="left:0px;width:27px">So</span><span style="left:27px;width:29px">Mo</span><span style="left:56px;width:22px">Di</span><span style="left:78px;width:23px">Mi</span><span style="left:101px;width:28px">Do</span><span style="left:129px;width:22px">Fr</span><span style="left:151px;width:26px">Sa</span></div>
<div class="wk" style="top:40px;height:16px">
<a class="d" style="left:0px;width:27px;height:16px;line-height:16px">1</a>
<a class="d" style="left:27px;width:29px;height:16px;line-height:16px">2</a>
<a class="d" style="left:56px;width:22px;height:16px;line-height:16px">3</a>
<a class="d" style="left:78px;width:23px;height:16px;line-height:16px">4</a>
<a class="d" style="left:101px;width:28px;height:16px;line-height:16px">5</a>
<a class="d" style="left:129px;width:22px;height:16px;line-height:16px">6</a>
<a class="d" style="left:151px;width:26px;height:16px;line-height:16px">7</a>
</div>
<div class="wk" style="top:56px;height:16px">
<a class="d" style="left:0px;width:27px;height:16px;line-height:16px">8</a>
<a class="d" style="left:27px;width:29px;height:16px;line-height:16px">9</a>
<a class="d" style="left:56px;width:22px;height:16px;line-height:16px">10</a>
<a class="d" style="left:78px;width:23px;height:16px;line-height:16px">11</a>
<a class="d" style="left:101px;width:28px;height:16px;line-height:16px">12</a>
<a class="d" style="left:129px;width:22px;height:16px;line-height:16px">13</a>
<a class="d" style="left:151px;width:26px;height:16px;line-height:16px">14</a>
</div>
<div class="wk" style="top:72px;height:16px">
<a class="d b" style="left:0px;width:27px;height:16px;line-height:16px">15</a>
<a class="d" style="left:27px;width:29px;height:16px;line-height:16px">16</a>
<a class="d" style="left:56px;width:22px;height:16px;line-height:16px">17</a>
<a class="d" style="left:78px;width:23px;height:16px;line-height:16px">18</a>
<a class="d" style="left:101px;width:28px;height:16px;line-height:16px">19</a>
<a class="d" style="left:129px;width:22px;height:16px;line-height:16px">20</a>
<a class="d" style="left:151px;width:26px;height:16px;line-height:16px">21</a>
</div>
<div class="wk" style="top:88px;height:16px">
<a class="d" style="left:0px;width:27px;height:16px;line-height:16px">22</a>
<a class="d" style="left:27px;width:29px;height:16px;line-height:16px">23</a>
<a class="d" style="left:56px;width:22px;height:16px;line-height:16px">24</a>
<a class="d" style="left:78px;width:23px;height:16px;line-height:16px">25</a>
<a class="d" style="left:101px;width:28px;height:16px;line-height:16px">26</a>
<a class="d" style="left:129px;width:22px;height:16px;line-height:16px">27</a>
<a class="d" style="left:151px;width:26px;height:16px;line-height:16px">28</a>
</div>
<div class="wk" style="top:104px;height:16px">
<a class="d" style="left:0px;width:27px;height:16px;line-height:16px">29</a>
<a class="d" style="left:27px;width:29px;height:16px;line-height:16px">30</a>
</div>
</div>
<div class="mon" style="left:13px;top:299px;height:120px">
<div class="mt"><span>Mai 2001</span></div>
<div class="wd"><span style="left:0px;width:27px">So</span><span style="left:27px;width:29px">Mo</span><span style="left:56px;width:22px">Di</span><span style="left:78px;width:23px">Mi</span><span style="left:101px;width:28px">Do</span><span style="left:129px;width:22px">Fr</span><span style="left:151px;width:26px">Sa</span></div>
<div class="wk" style="top:40px;height:16px">
<a class="d" style="left:56px;width:22px;height:16px;line-height:16px">1</a>
<a class="d" style="left:78px;width:23px;height:16px;line-height:16px">2</a>
<a class="d" style="left:101px;width:28px;height:16px;line-height:16px">3</a>
<a class="d" style="left:129px;width:22px;height:16px;line-height:16px">4</a>
<a class="d" style="left:151px;width:26px;height:16px;line-height:16px">5</a>
</div>
<div class="wk" style="top:56px;height:16px">
<a class="d" style="left:0px;width:27px;height:16px;line-height:16px">6</a>
<a class="d" style="left:27px;width:29px;height:16px;line-height:16px">7</a>
<a class="d" style="left:56px;width:22px;height:16px;line-height:16px">8</a>
<a class="d" style="left:78px;width:23px;height:16px;line-height:16px">9</a>
<a class="d" style="left:101px;width:28px;height:16px;line-height:16px">10</a>
<a class="d" style="left:129px;width:22px;height:16px;line-height:16px">11</a>
<a class="d b" style="left:151px;width:26px;height:16px;line-height:16px">12</a>
</div>
<div class="wk" style="top:72px;height:16px">
<a class="d" style="left:0px;width:27px;height:16px;line-height:16px">13</a>
<a class="d" style="left:27px;width:29px;height:16px;line-height:16px">14</a>
<a class="d" style="left:56px;width:22px;height:16px;line-height:16px">15</a>
<a class="d" style="left:78px;width:23px;height:16px;line-height:16px">16</a>
<a class="d" style="left:101px;width:28px;height:16px;line-height:16px">17</a>
<a class="d" style="left:129px;width:22px;height:16px;line-height:16px">18</a>
<a class="d" style="left:151px;width:26px;height:16px;line-height:16px">19</a>
</div>
<div class="wk" style="top:88px;height:16px">
<a class="d" style="left:0px;width:27px;height:16px;line-height:16px">20</a>
<a class="d" style="left:27px;width:29px;height:16px;line-height:16px">21</a>
<a class="d" style="left:56px;width:22px;height:16px;line-height:16px">22</a>
<a class="d" style="left:78px;width:23px;height:16px;line-height:16px">23</a>
<a class="d" style="left:101px;width:28px;height:16px;line-height:16px">24</a>
<a class="d" style="left:129px;width:22px;height:16px;line-height:16px">25</a>
<a class="d" style="left:151px;width:26px;height:16px;line-height:16px">26</a>
</div>
<div class="wk" style="top:104px;height:16px">
<a class="d" style="left:0px;width:27px;height:16px;line-height:16px">27</a>
<a class="d" style="left:27px;width:29px;height:16px;line-height:16px">28</a>
<a class="d" style="left:56px;width:22px;height:16px;line-height:16px">29</a>
<a class="d" style="left:78px;width:23px;height:16px;line-height:16px">30</a>
<a class="d" style="left:101px;width:28px;height:16px;line-height:16px">31</a>
</div>
</div>
<div class="mon" style="left:196px;top:299px;height:120px">
<div class="mt"><span>Juni 2001</span></div>
<div class="wd"><span style="left:0px;width:27px">So</span><span style="left:27px;width:29px">Mo</span><span style="left:56px;width:22px">Di</span><span style="left:78px;width:23px">Mi</span><span style="left:101px;width:28px">Do</span><span style="left:129px;width:22px">Fr</span><span style="left:151px;width:26px">Sa</span></div>
<div class="wk" style="top:40px;height:16px">
<a class="d" style="left:129px;width:22px;height:16px;line-height:16px">1</a>
<a class="d" style="left:151px;width:26px;height:16px;line-height:16px">2</a>
</div>
<div class="wk" style="top:56px;height:16px">
<a class="d" style="left:0px;width:27px;height:16px;line-height:16px">3</a>
<a class="d" style="left:27px;width:29px;height:16px;line-height:16px">4</a>
<a class="d" style="left:56px;width:22px;height:16px;line-height:16px">5</a>
<a class="d" style="left:78px;width:23px;height:16px;line-height:16px">6</a>
<a class="d" style="left:101px;width:28px;height:16px;line-height:16px">7</a>
<a class="d b" style="left:129px;width:22px;height:16px;line-height:16px">8</a>
<a class="d" style="left:151px;width:26px;height:16px;line-height:16px">9</a>
</div>
<div class="wk" style="top:72px;height:16px">
<a class="d" style="left:0px;width:27px;height:16px;line-height:16px">10</a>
<a class="d b" style="left:27px;width:29px;height:16px;line-height:16px">11</a>
<a class="d b" style="left:56px;width:22px;height:16px;line-height:16px">12</a>
<a class="d" style="left:78px;width:23px;height:16px;line-height:16px">13</a>
<a class="d b" style="left:101px;width:28px;height:16px;line-height:16px">14</a>
<a class="d b" style="left:129px;width:22px;height:16px;line-height:16px">15</a>
<a class="d" style="left:151px;width:26px;height:16px;line-height:16px">16</a>
</div>
<div class="wk" style="top:88px;height:16px">
<a class="d" style="left:0px;width:27px;height:16px;line-height:16px">17</a>
<a class="d b" style="left:27px;width:29px;height:16px;line-height:16px">18</a>
<a class="d" style="left:56px;width:22px;height:16px;line-height:16px">19</a>
<a class="d b" style="left:78px;width:23px;height:16px;line-height:16px">20</a>
<a class="d" style="left:101px;width:28px;height:16px;line-height:16px">21</a>
<a class="d b" style="left:129px;width:22px;height:16px;line-height:16px">22</a>
<a class="d b" style="left:151px;width:26px;height:16px;line-height:16px">23</a>
</div>
<div class="wk" style="top:104px;height:16px">
<a class="d b" style="left:0px;width:27px;height:16px;line-height:16px">24</a>
<a class="d b" style="left:27px;width:29px;height:16px;line-height:16px">25</a>
<a class="d b" style="left:56px;width:22px;height:16px;line-height:16px">26</a>
<a class="d" style="left:78px;width:23px;height:16px;line-height:16px">27</a>
<a class="d b" style="left:101px;width:28px;height:16px;line-height:16px">28</a>
<a class="d b" style="left:129px;width:22px;height:16px;line-height:16px">29</a>
<a class="d b" style="left:151px;width:26px;height:16px;line-height:16px">30</a>
</div>
</div>
<div class="mon" style="left:379px;top:299px;height:120px">
<div class="mt"><span>Juli 2001</span></div>
<div class="wd"><span style="left:0px;width:27px">So</span><span style="left:27px;width:29px">Mo</span><span style="left:56px;width:22px">Di</span><span style="left:78px;width:23px">Mi</span><span style="left:101px;width:28px">Do</span><span style="left:129px;width:22px">Fr</span><span style="left:151px;width:26px">Sa</span></div>
<div class="wk" style="top:40px;height:16px">
<a class="d b" style="left:0px;width:27px;height:16px;line-height:16px">1</a>
<a class="d b" style="left:27px;width:29px;height:16px;line-height:16px">2</a>
<a class="d b" style="left:56px;width:22px;height:16px;line-height:16px">3</a>
<a class="d b" style="left:78px;width:23px;height:16px;line-height:16px">4</a>
<a class="d b" style="left:101px;width:28px;height:16px;line-height:16px">5</a>
<a class="d b" style="left:129px;width:22px;height:16px;line-height:16px">6</a>
<a class="d b" style="left:151px;width:26px;height:16px;line-height:16px">7</a>
</div>
<div class="wk" style="top:56px;height:16px">
<a class="d b" style="left:0px;width:27px;height:16px;line-height:16px">8</a>
<a class="d b" style="left:27px;width:29px;height:16px;line-height:16px">9</a>
<a class="d b" style="left:56px;width:22px;height:16px;line-height:16px">10</a>
<a class="d b" style="left:78px;width:23px;height:16px;line-height:16px">11</a>
<a class="d b" style="left:101px;width:28px;height:16px;line-height:16px">12</a>
<a class="d b" style="left:129px;width:22px;height:16px;line-height:16px">13</a>
<a class="d b" style="left:151px;width:26px;height:16px;line-height:16px">14</a>
</div>
<div class="wk" style="top:72px;height:16px">
<a class="d b" style="left:0px;width:27px;height:16px;line-height:16px">15</a>
<a class="d b" style="left:27px;width:29px;height:16px;line-height:16px">16</a>
<a class="d b" style="left:56px;width:22px;height:16px;line-height:16px">17</a>
<a class="d b" style="left:78px;width:23px;height:16px;line-height:16px">18</a>
<a class="d b" style="left:101px;width:28px;height:16px;line-height:16px">19</a>
<a class="d b" style="left:129px;width:22px;height:16px;line-height:16px">20</a>
<a class="d b" style="left:151px;width:26px;height:16px;line-height:16px">21</a>
</div>
<div class="wk" style="top:88px;height:16px">
<a class="d b" style="left:0px;width:27px;height:16px;line-height:16px">22</a>
<a class="d b" style="left:27px;width:29px;height:16px;line-height:16px">23</a>
<a class="d b" style="left:56px;width:22px;height:16px;line-height:16px">24</a>
<a class="d b" style="left:78px;width:23px;height:16px;line-height:16px">25</a>
<a class="d b" style="left:101px;width:28px;height:16px;line-height:16px">26</a>
<a class="d b" style="left:129px;width:22px;height:16px;line-height:16px">27</a>
<a class="d b" style="left:151px;width:26px;height:16px;line-height:16px">28</a>
</div>
<div class="wk" style="top:104px;height:16px">
<a class="d b" style="left:0px;width:27px;height:16px;line-height:16px">29</a>
<a class="d b" style="left:27px;width:29px;height:16px;line-height:16px">30</a>
<a class="d b" style="left:56px;width:22px;height:16px;line-height:16px">31</a>
</div>
</div>
<div class="mon" style="left:562px;top:299px;height:120px">
<div class="mt"><span>August 2001</span></div>
<div class="wd"><span style="left:0px;width:27px">So</span><span style="left:27px;width:29px">Mo</span><span style="left:56px;width:22px">Di</span><span style="left:78px;width:23px">Mi</span><span style="left:101px;width:28px">Do</span><span style="left:129px;width:22px">Fr</span><span style="left:151px;width:26px">Sa</span></div>
<div class="wk" style="top:40px;height:16px">
<a class="d b" style="left:78px;width:23px;height:16px;line-height:16px">1</a>
<a class="d b" style="left:101px;width:28px;height:16px;line-height:16px">2</a>
<a class="d b" style="left:129px;width:22px;height:16px;line-height:16px">3</a>
<a class="d b" style="left:151px;width:26px;height:16px;line-height:16px">4</a>
</div>
<div class="wk" style="top:56px;height:16px">
<a class="d b" style="left:0px;width:27px;height:16px;line-height:16px">5</a>
<a class="d b" style="left:27px;width:29px;height:16px;line-height:16px">6</a>
<a class="d b" style="left:56px;width:22px;height:16px;line-height:16px">7</a>
<a class="d b" style="left:78px;width:23px;height:16px;line-height:16px">8</a>
<a class="d b" style="left:101px;width:28px;height:16px;line-height:16px">9</a>
<a class="d b" style="left:129px;width:22px;height:16px;line-height:16px">10</a>
<a class="d b" style="left:151px;width:26px;height:16px;line-height:16px">11</a>
</div>
<div class="wk" style="top:72px;height:16px">
<a class="d b" style="left:0px;width:27px;height:16px;line-height:16px">12</a>
<a class="d b" style="left:27px;width:29px;height:16px;line-height:16px">13</a>
<a class="d b" style="left:56px;width:22px;height:16px;line-height:16px">14</a>
<a class="d b" style="left:78px;width:23px;height:16px;line-height:16px">15</a>
<a class="d b" style="left:101px;width:28px;height:16px;line-height:16px">16</a>
<a class="d b" style="left:129px;width:22px;height:16px;line-height:16px">17</a>
<a class="d b" style="left:151px;width:26px;height:16px;line-height:16px">18</a>
</div>
<div class="wk" style="top:88px;height:16px">
<a class="d b" style="left:0px;width:27px;height:16px;line-height:16px">19</a>
<a class="d b" style="left:27px;width:29px;height:16px;line-height:16px">20</a>
<a class="d b" style="left:56px;width:22px;height:16px;line-height:16px">21</a>
<a class="d b" style="left:78px;width:23px;height:16px;line-height:16px">22</a>
<a class="d b" style="left:101px;width:28px;height:16px;line-height:16px">23</a>
<a class="d b" style="left:129px;width:22px;height:16px;line-height:16px">24</a>
<a class="d b" style="left:151px;width:26px;height:16px;line-height:16px">25</a>
</div>
<div class="wk" style="top:104px;height:16px">
<a class="d b" style="left:0px;width:27px;height:16px;line-height:16px">26</a>
<a class="d b" style="left:27px;width:29px;height:16px;line-height:16px">27</a>
<a class="d b" style="left:56px;width:22px;height:16px;line-height:16px">28</a>
<a class="d b" style="left:78px;width:23px;height:16px;line-height:16px">29</a>
<a class="d b" style="left:101px;width:28px;height:16px;line-height:16px">30</a>
<a class="d b" style="left:129px;width:22px;height:16px;line-height:16px">31</a>
</div>
</div>
<div class="mon" style="left:13px;top:425px;height:140px">
<div class="mt"><span>September 2001</span></div>
<div class="wd"><span style="left:0px;width:27px">So</span><span style="left:27px;width:29px">Mo</span><span style="left:56px;width:22px">Di</span><span style="left:78px;width:23px">Mi</span><span style="left:101px;width:28px">Do</span><span style="left:129px;width:22px">Fr</span><span style="left:151px;width:26px">Sa</span></div>
<div class="wk" style="top:40px;height:16px">
<a class="d b" style="left:151px;width:26px;height:16px;line-height:16px">1</a>
</div>
<div class="wk" style="top:56px;height:20px">
<a class="d b" style="left:0px;width:27px;height:20px;line-height:20px">2</a>
<a class="d today" style="left:27px;width:29px;height:20px;line-height:20px">3</a>
<a class="d b" style="left:56px;width:22px;height:20px;line-height:20px">4</a>
<a class="d b" style="left:78px;width:23px;height:20px;line-height:20px">5</a>
<a class="d b" style="left:101px;width:28px;height:20px;line-height:20px">6</a>
<a class="d b" style="left:129px;width:22px;height:20px;line-height:20px">7</a>
<a class="d b" style="left:151px;width:26px;height:20px;line-height:20px">8</a>
</div>
<div class="wk" style="top:76px;height:16px">
<a class="d b" style="left:0px;width:27px;height:16px;line-height:16px">9</a>
<a class="d b" style="left:27px;width:29px;height:16px;line-height:16px">10</a>
<a class="d b" style="left:56px;width:22px;height:16px;line-height:16px">11</a>
<a class="d b" style="left:78px;width:23px;height:16px;line-height:16px">12</a>
<a class="d b" style="left:101px;width:28px;height:16px;line-height:16px">13</a>
<a class="d b" style="left:129px;width:22px;height:16px;line-height:16px">14</a>
<a class="d b" style="left:151px;width:26px;height:16px;line-height:16px">15</a>
</div>
<div class="wk" style="top:92px;height:16px">
<a class="d b" style="left:0px;width:27px;height:16px;line-height:16px">16</a>
<a class="d b" style="left:27px;width:29px;height:16px;line-height:16px">17</a>
<a class="d b" style="left:56px;width:22px;height:16px;line-height:16px">18</a>
<a class="d b" style="left:78px;width:23px;height:16px;line-height:16px">19</a>
<a class="d b" style="left:101px;width:28px;height:16px;line-height:16px">20</a>
<a class="d b" style="left:129px;width:22px;height:16px;line-height:16px">21</a>
<a class="d b" style="left:151px;width:26px;height:16px;line-height:16px">22</a>
</div>
<div class="wk" style="top:108px;height:16px">
<a class="d b" style="left:0px;width:27px;height:16px;line-height:16px">23</a>
<a class="d b" style="left:27px;width:29px;height:16px;line-height:16px">24</a>
<a class="d b" style="left:56px;width:22px;height:16px;line-height:16px">25</a>
<a class="d b" style="left:78px;width:23px;height:16px;line-height:16px">26</a>
<a class="d b" style="left:101px;width:28px;height:16px;line-height:16px">27</a>
<a class="d b" style="left:129px;width:22px;height:16px;line-height:16px">28</a>
<a class="d b" style="left:151px;width:26px;height:16px;line-height:16px">29</a>
</div>
<div class="wk" style="top:124px;height:16px">
<a class="d b" style="left:0px;width:27px;height:16px;line-height:16px">30</a>
</div>
</div>
<div class="mon" style="left:196px;top:425px;height:120px">
<div class="mt"><span>Oktober 2001</span></div>
<div class="wd"><span style="left:0px;width:27px">So</span><span style="left:27px;width:29px">Mo</span><span style="left:56px;width:22px">Di</span><span style="left:78px;width:23px">Mi</span><span style="left:101px;width:28px">Do</span><span style="left:129px;width:22px">Fr</span><span style="left:151px;width:26px">Sa</span></div>
<div class="wk" style="top:40px;height:16px">
<a class="d b" style="left:27px;width:29px;height:16px;line-height:16px">1</a>
<a class="d b" style="left:56px;width:22px;height:16px;line-height:16px">2</a>
<a class="d b" style="left:78px;width:23px;height:16px;line-height:16px">3</a>
<a class="d b" style="left:101px;width:28px;height:16px;line-height:16px">4</a>
<a class="d b" style="left:129px;width:22px;height:16px;line-height:16px">5</a>
<a class="d b" style="left:151px;width:26px;height:16px;line-height:16px">6</a>
</div>
<div class="wk" style="top:56px;height:16px">
<a class="d b" style="left:0px;width:27px;height:16px;line-height:16px">7</a>
<a class="d b" style="left:27px;width:29px;height:16px;line-height:16px">8</a>
<a class="d b" style="left:56px;width:22px;height:16px;line-height:16px">9</a>
<a class="d b" style="left:78px;width:23px;height:16px;line-height:16px">10</a>
<a class="d b" style="left:101px;width:28px;height:16px;line-height:16px">11</a>
<a class="d b" style="left:129px;width:22px;height:16px;line-height:16px">12</a>
<a class="d b" style="left:151px;width:26px;height:16px;line-height:16px">13</a>
</div>
<div class="wk" style="top:72px;height:16px">
<a class="d b" style="left:0px;width:27px;height:16px;line-height:16px">14</a>
<a class="d b" style="left:27px;width:29px;height:16px;line-height:16px">15</a>
<a class="d b" style="left:56px;width:22px;height:16px;line-height:16px">16</a>
<a class="d b" style="left:78px;width:23px;height:16px;line-height:16px">17</a>
<a class="d b" style="left:101px;width:28px;height:16px;line-height:16px">18</a>
<a class="d b" style="left:129px;width:22px;height:16px;line-height:16px">19</a>
<a class="d b" style="left:151px;width:26px;height:16px;line-height:16px">20</a>
</div>
<div class="wk" style="top:88px;height:16px">
<a class="d b" style="left:0px;width:27px;height:16px;line-height:16px">21</a>
<a class="d" style="left:27px;width:29px;height:16px;line-height:16px">22</a>
<a class="d" style="left:56px;width:22px;height:16px;line-height:16px">23</a>
<a class="d" style="left:78px;width:23px;height:16px;line-height:16px">24</a>
<a class="d b" style="left:101px;width:28px;height:16px;line-height:16px">25</a>
<a class="d" style="left:129px;width:22px;height:16px;line-height:16px">26</a>
<a class="d" style="left:151px;width:26px;height:16px;line-height:16px">27</a>
</div>
<div class="wk" style="top:104px;height:16px">
<a class="d" style="left:0px;width:27px;height:16px;line-height:16px">28</a>
<a class="d" style="left:27px;width:29px;height:16px;line-height:16px">29</a>
<a class="d" style="left:56px;width:22px;height:16px;line-height:16px">30</a>
<a class="d" style="left:78px;width:23px;height:16px;line-height:16px">31</a>
</div>
</div>
<div class="mon" style="left:379px;top:425px;height:120px">
<div class="mt"><span>November 2001</span></div>
<div class="wd"><span style="left:0px;width:27px">So</span><span style="left:27px;width:29px">Mo</span><span style="left:56px;width:22px">Di</span><span style="left:78px;width:23px">Mi</span><span style="left:101px;width:28px">Do</span><span style="left:129px;width:22px">Fr</span><span style="left:151px;width:26px">Sa</span></div>
<div class="wk" style="top:40px;height:16px">
<a class="d" style="left:101px;width:28px;height:16px;line-height:16px">1</a>
<a class="d" style="left:129px;width:22px;height:16px;line-height:16px">2</a>
<a class="d" style="left:151px;width:26px;height:16px;line-height:16px">3</a>
</div>
<div class="wk" style="top:56px;height:16px">
<a class="d" style="left:0px;width:27px;height:16px;line-height:16px">4</a>
<a class="d" style="left:27px;width:29px;height:16px;line-height:16px">5</a>
<a class="d" style="left:56px;width:22px;height:16px;line-height:16px">6</a>
<a class="d" style="left:78px;width:23px;height:16px;line-height:16px">7</a>
<a class="d" style="left:101px;width:28px;height:16px;line-height:16px">8</a>
<a class="d b" style="left:129px;width:22px;height:16px;line-height:16px">9</a>
<a class="d b" style="left:151px;width:26px;height:16px;line-height:16px">10</a>
</div>
<div class="wk" style="top:72px;height:16px">
<a class="d b" style="left:0px;width:27px;height:16px;line-height:16px">11</a>
<a class="d" style="left:27px;width:29px;height:16px;line-height:16px">12</a>
<a class="d" style="left:56px;width:22px;height:16px;line-height:16px">13</a>
<a class="d" style="left:78px;width:23px;height:16px;line-height:16px">14</a>
<a class="d" style="left:101px;width:28px;height:16px;line-height:16px">15</a>
<a class="d" style="left:129px;width:22px;height:16px;line-height:16px">16</a>
<a class="d" style="left:151px;width:26px;height:16px;line-height:16px">17</a>
</div>
<div class="wk" style="top:88px;height:16px">
<a class="d" style="left:0px;width:27px;height:16px;line-height:16px">18</a>
<a class="d" style="left:27px;width:29px;height:16px;line-height:16px">19</a>
<a class="d b" style="left:56px;width:22px;height:16px;line-height:16px">20</a>
<a class="d" style="left:78px;width:23px;height:16px;line-height:16px">21</a>
<a class="d b" style="left:101px;width:28px;height:16px;line-height:16px">22</a>
<a class="d" style="left:129px;width:22px;height:16px;line-height:16px">23</a>
<a class="d" style="left:151px;width:26px;height:16px;line-height:16px">24</a>
</div>
<div class="wk" style="top:104px;height:16px">
<a class="d" style="left:0px;width:27px;height:16px;line-height:16px">25</a>
<a class="d" style="left:27px;width:29px;height:16px;line-height:16px">26</a>
<a class="d" style="left:56px;width:22px;height:16px;line-height:16px">27</a>
<a class="d" style="left:78px;width:23px;height:16px;line-height:16px">28</a>
<a class="d" style="left:101px;width:28px;height:16px;line-height:16px">29</a>
<a class="d" style="left:129px;width:22px;height:16px;line-height:16px">30</a>
</div>
</div>
<div class="mon" style="left:562px;top:425px;height:136px">
<div class="mt"><span>Dezember 2001</span></div>
<div class="wd"><span style="left:0px;width:27px">So</span><span style="left:27px;width:29px">Mo</span><span style="left:56px;width:22px">Di</span><span style="left:78px;width:23px">Mi</span><span style="left:101px;width:28px">Do</span><span style="left:129px;width:22px">Fr</span><span style="left:151px;width:26px">Sa</span></div>
<div class="wk" style="top:40px;height:16px">
<a class="d b" style="left:151px;width:26px;height:16px;line-height:16px">1</a>
</div>
<div class="wk" style="top:56px;height:16px">
<a class="d" style="left:0px;width:27px;height:16px;line-height:16px">2</a>
<a class="d" style="left:27px;width:29px;height:16px;line-height:16px">3</a>
<a class="d" style="left:56px;width:22px;height:16px;line-height:16px">4</a>
<a class="d" style="left:78px;width:23px;height:16px;line-height:16px">5</a>
<a class="d" style="left:101px;width:28px;height:16px;line-height:16px">6</a>
<a class="d b" style="left:129px;width:22px;height:16px;line-height:16px">7</a>
<a class="d" style="left:151px;width:26px;height:16px;line-height:16px">8</a>
</div>
<div class="wk" style="top:72px;height:16px">
<a class="d" style="left:0px;width:27px;height:16px;line-height:16px">9</a>
<a class="d" style="left:27px;width:29px;height:16px;line-height:16px">10</a>
<a class="d b" style="left:56px;width:22px;height:16px;line-height:16px">11</a>
<a class="d" style="left:78px;width:23px;height:16px;line-height:16px">12</a>
<a class="d" style="left:101px;width:28px;height:16px;line-height:16px">13</a>
<a class="d" style="left:129px;width:22px;height:16px;line-height:16px">14</a>
<a class="d" style="left:151px;width:26px;height:16px;line-height:16px">15</a>
</div>
<div class="wk" style="top:88px;height:16px">
<a class="d" style="left:0px;width:27px;height:16px;line-height:16px">16</a>
<a class="d" style="left:27px;width:29px;height:16px;line-height:16px">17</a>
<a class="d" style="left:56px;width:22px;height:16px;line-height:16px">18</a>
<a class="d" style="left:78px;width:23px;height:16px;line-height:16px">19</a>
<a class="d b" style="left:101px;width:28px;height:16px;line-height:16px">20</a>
<a class="d" style="left:129px;width:22px;height:16px;line-height:16px">21</a>
<a class="d" style="left:151px;width:26px;height:16px;line-height:16px">22</a>
</div>
<div class="wk" style="top:104px;height:16px">
<a class="d" style="left:0px;width:27px;height:16px;line-height:16px">23</a>
<a class="d" style="left:27px;width:29px;height:16px;line-height:16px">24</a>
<a class="d" style="left:56px;width:22px;height:16px;line-height:16px">25</a>
<a class="d" style="left:78px;width:23px;height:16px;line-height:16px">26</a>
<a class="d" style="left:101px;width:28px;height:16px;line-height:16px">27</a>
<a class="d" style="left:129px;width:22px;height:16px;line-height:16px">28</a>
<a class="d" style="left:151px;width:26px;height:16px;line-height:16px">29</a>
</div>
<div class="wk" style="top:120px;height:16px">
<a class="d" style="left:0px;width:27px;height:16px;line-height:16px">30</a>
<a class="d" style="left:27px;width:29px;height:16px;line-height:16px">31</a>
</div>
</div>
</div></div>

<!-- scrollbar -->
<div style="position:absolute;left:836px;top:155px;width:15px;height:526px;background:#a3a3a3;border-left:2px solid #6b6b6b;border-top:2px solid #6b6b6b;border-right:2px solid #f2f0ec;border-bottom:2px solid #f2f0ec"></div>
<div style="position:absolute;left:838px;top:173px;width:11px;height:356px;background:#c0c0c0;border:2px solid #6b6b6b;border-top-color:#f2f0ec;border-left-color:#f2f0ec"></div>
<svg width="15" height="526" viewBox="836 155 15 526" style="position:absolute;left:836px;top:155px">
<polygon points="843.5,157 848.5,166.5 838.5,166.5" fill="#c0c0c0"/>
<polyline points="843.5,157.5 838.7,166" fill="none" stroke="#f2f0ec" stroke-width="1.4"/>
<polyline points="843.7,157.5 848.3,166 838.5,166.2" fill="none" stroke="#6b6b6b" stroke-width="1.4"/>
<polygon points="838.5,668 848.5,668 843.5,678" fill="#b4b4b4"/>
<polyline points="848.5,668 838.5,668 843.3,677.5" fill="none" stroke="#f2f0ec" stroke-width="1.4"/>
<polyline points="848.2,668.5 843.6,677.5" fill="none" stroke="#6b6b6b" stroke-width="1.5"/>
</svg>
</body>
</html>
